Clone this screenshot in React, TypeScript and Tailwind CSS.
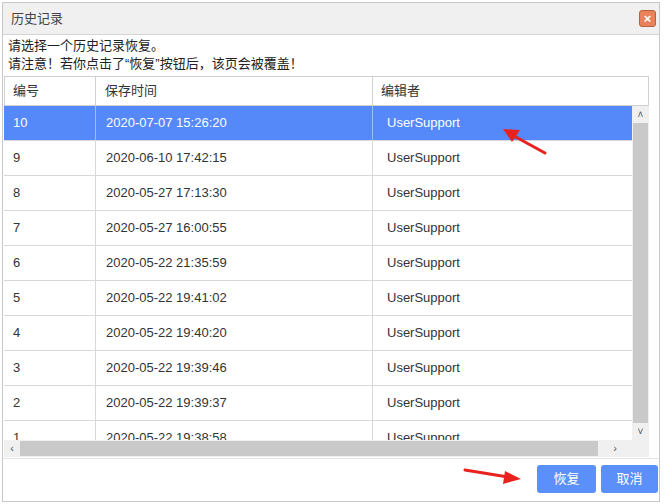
const rows = [
  ["10", "2020-07-07 15:26:20"],
  ["9", "2020-06-10 17:42:15"],
  ["8", "2020-05-27 17:13:30"],
  ["7", "2020-05-27 16:00:55"],
  ["6", "2020-05-22 21:35:59"],
  ["5", "2020-05-22 19:41:02"],
  ["4", "2020-05-22 19:40:20"],
  ["3", "2020-05-22 19:39:46"],
  ["2", "2020-05-22 19:39:37"],
  ["1", "2020-05-22 19:38:58"],
];

const font = { fontFamily: '"Liberation Sans", "Noto Sans CJK SC", sans-serif' };

export default function App() {
  return (
    <div className="relative h-[504px] w-[667px] overflow-hidden bg-white pt-[2px] pl-[2px]" style={font}>
      <div className="flex h-[500px] w-[658px] flex-col border border-[#c8c8c8] bg-white text-[13px] text-[#333]">
        {/* title bar */}
        <div className="flex h-[32px] shrink-0 items-center justify-between border-b border-[#d4d4d4] bg-[#f0f0f0] pr-[3px] pl-[8px]">
          <span className="text-[13px] text-[#444]">历史记录</span>
          <div className="flex h-[17px] w-[17px] items-center justify-center rounded-[3px] border border-[#b5633a] bg-[#e9825a] text-[13px] leading-none font-bold text-white">
            ×
          </div>
        </div>
        <div className="px-[5px] pt-[2px] pb-[3px] text-[13px] leading-[18px] text-[#222]">
          <div>请选择一个历史记录恢复。</div>
          <div>请注意！若你点击了“恢复”按钮后，该页会被覆盖！</div>
        </div>
        {/* table */}
        <div className="ml-[1px] flex w-[645px] shrink-0 flex-col">
          <div className="flex h-[30px] border border-[#d0d0d0] bg-white">
            <div className="flex w-[91px] items-center border-r border-[#d0d0d0] pl-[8px]">编号</div>
            <div className="flex w-[277px] items-center border-r border-[#d0d0d0] pl-[9px]">保存时间</div>
            <div className="flex flex-1 items-center pl-[8px]">编辑者</div>
          </div>
          <div className="flex h-[351px]">
            <div className="flex w-[628px] flex-col">
              <div className="h-[334px] overflow-hidden">
                {rows.map(([id, t], i) => (
                  <div
                    key={id}
                    className={`flex h-[35px] shrink-0 border-b border-[#d8d8d8] ${i === 0 ? "bg-[#5588f8] text-white" : "bg-white text-[#333]"}`}
                  >
                    <div className={`flex w-[92px] items-center border-r pl-[9px] ${i === 0 ? "border-[#9fbcf8]" : "border-[#d8d8d8]"}`}>{id}</div>
                    <div className={`flex w-[277px] items-center border-r pl-[10px] ${i === 0 ? "border-[#9fbcf8]" : "border-[#d8d8d8]"}`}>{t}</div>
                    <div className="flex flex-1 items-center pl-[14px]">UserSupport</div>
                  </div>
                ))}
              </div>
              <div className="flex h-[17px] items-center bg-[#f0f0f0] text-[11px] text-[#555]">
                <span className="w-[16px] text-center">‹</span>
                <div className="h-[15px] w-[578px] bg-[#c9c9c9]" />
                <span className="flex-1 text-center">›</span>
              </div>
            </div>
            <div className="flex w-[17px] flex-col items-center bg-[#f0f0f0] text-[10px] text-[#555]">
              <span className="h-[17px] leading-[17px]">˄</span>
              <div className="h-[300px] w-[15px] bg-[#c9c9c9]" />
              <span className="h-[17px] leading-[17px]">˅</span>
            </div>
          </div>
        </div>
        {/* footer */}
        <div className="mt-[1px] flex flex-1 items-start justify-end gap-[5px] border-t border-[#e4e4e4] pt-[6px] pr-[1px]">
          <button className="h-[28px] w-[59px] rounded-[3px] bg-[#5b8ff9] text-[13px] text-white">恢复</button>
          <button className="h-[28px] w-[57px] rounded-[3px] bg-[#5b8ff9] text-[13px] text-white">取消</button>
        </div>
      </div>
      <svg className="absolute top-0 left-0" width="667" height="504">
        <line x1="545" y1="153" x2="514" y2="136" stroke="#e8231f" strokeWidth="3" strokeLinecap="round" />
        <polygon points="503,129 520,130 512,142" fill="#e8231f" />
        <line x1="465" y1="470" x2="508" y2="477" stroke="#e8231f" strokeWidth="3" strokeLinecap="round" />
        <polygon points="521,479 505,471 503,484" fill="#e8231f" />
      </svg>
    </div>
  );
}
